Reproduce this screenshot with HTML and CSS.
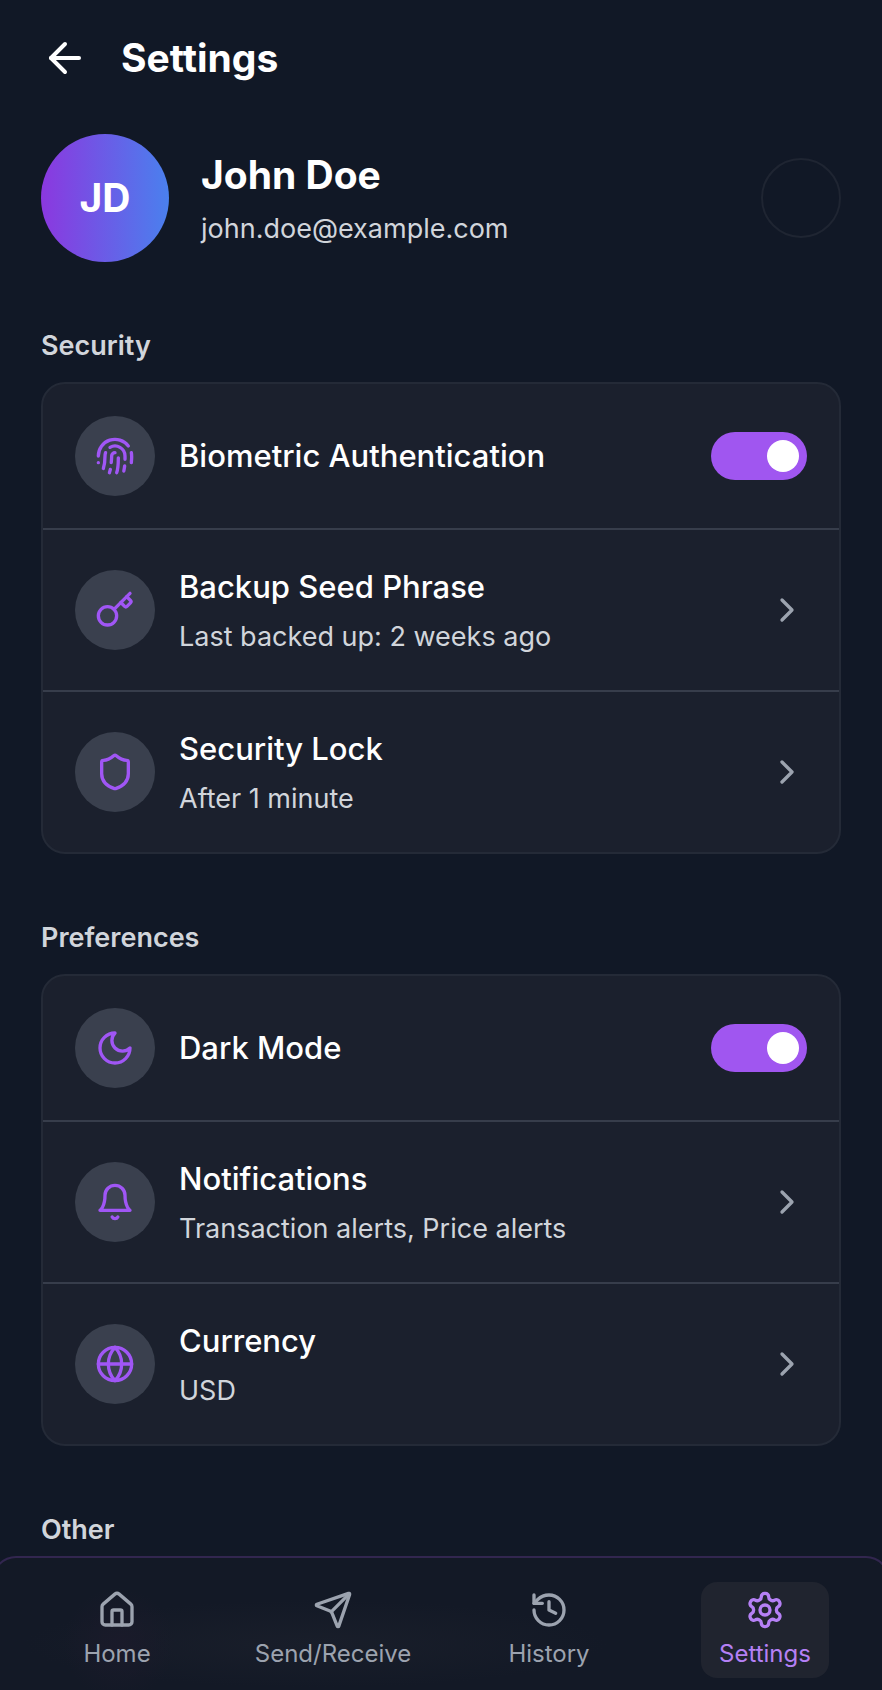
FILE: index.html
```html
<!DOCTYPE html>
<html lang="en">
<head>
<meta charset="utf-8">
<meta name="viewport" content="width=device-width, initial-scale=1">
<title>Settings</title>
<link rel="stylesheet" href="styles.css">
</head>
<body>
<main class="page">
  <header class="header">
    <button class="back" type="button" aria-label="Back">
      <svg class="icon-lg" viewBox="0 0 24 24"><path d="m12 19-7-7 7-7"/><path d="M19 12H5"/></svg>
    </button>
    <h1 class="title">Settings</h1>
  </header>

  <section class="profile">
    <div class="avatar">JD</div>
    <div class="profile-text">
      <h2 class="title">John Doe</h2>
      <p class="sub">john.doe@example.com</p>
    </div>
    <button class="edit" type="button" aria-label="Edit profile"></button>
  </section>

  <section class="group">
    <h3 class="label">Security</h3>
    <div class="card">
      <div class="row">
        <span class="badge"><svg class="icon" viewBox="0 0 24 24"><path d="M12 10a2 2 0 0 0-2 2c0 1.02-.1 2.51-.26 4"/><path d="M14 13.12c0 2.38 0 6.38-1 8.88"/><path d="M17.29 21.02c.12-.6.43-2.3.5-3.02"/><path d="M2 12a10 10 0 0 1 18-6"/><path d="M2 16h.01"/><path d="M21.8 16c.2-2 .131-5.354 0-6"/><path d="M5 19.5C5.5 18 6 15 6 12a6 6 0 0 1 .34-2"/><path d="M8.65 22c.21-.66.45-1.32.57-2"/><path d="M9 6.8a6 6 0 0 1 9 5.2v2"/></svg></span>
        <label class="row-text row-title" for="biometric">Biometric Authentication</label>
        <input class="toggle" id="biometric" type="checkbox" role="switch" checked>
      </div>
      <button class="row" type="button">
        <span class="badge"><svg class="icon" viewBox="0 0 24 24"><path d="m15.5 7.5 2.3 2.3a1 1 0 0 0 1.4 0l2.1-2.1a1 1 0 0 0 0-1.4L19 4"/><path d="m21 2-9.6 9.6"/><circle cx="7.5" cy="15.5" r="5.5"/></svg></span>
        <span class="row-text"><span class="row-title">Backup Seed Phrase</span><span class="sub">Last backed up: 2 weeks ago</span></span>
        <svg class="icon chevron" viewBox="0 0 24 24"><path d="m9 18 6-6-6-6"/></svg>
      </button>
      <button class="row" type="button">
        <span class="badge"><svg class="icon" viewBox="0 0 24 24"><path d="M20 13c0 5-3.5 7.5-7.66 8.95a1 1 0 0 1-.67-.01C7.5 20.5 4 18 4 13V6a1 1 0 0 1 1-1c2 0 4.5-1.2 6.24-2.72a1.17 1.17 0 0 1 1.52 0C14.51 3.81 17 5 19 5a1 1 0 0 1 1 1z"/></svg></span>
        <span class="row-text"><span class="row-title">Security Lock</span><span class="sub">After 1 minute</span></span>
        <svg class="icon chevron" viewBox="0 0 24 24"><path d="m9 18 6-6-6-6"/></svg>
      </button>
    </div>
  </section>

  <section class="group">
    <h3 class="label">Preferences</h3>
    <div class="card">
      <div class="row">
        <span class="badge"><svg class="icon" viewBox="0 0 24 24"><path d="M12 3a6 6 0 0 0 9 9 9 9 0 1 1-9-9Z"/></svg></span>
        <label class="row-text row-title" for="dark">Dark Mode</label>
        <input class="toggle" id="dark" type="checkbox" role="switch" checked>
      </div>
      <button class="row" type="button">
        <span class="badge"><svg class="icon" viewBox="0 0 24 24"><path d="M6 8a6 6 0 0 1 12 0c0 7 3 9 3 9H3s3-2 3-9"/><path d="M10.3 21a1.94 1.94 0 0 0 3.4 0"/></svg></span>
        <span class="row-text"><span class="row-title">Notifications</span><span class="sub">Transaction alerts, Price alerts</span></span>
        <svg class="icon chevron" viewBox="0 0 24 24"><path d="m9 18 6-6-6-6"/></svg>
      </button>
      <button class="row" type="button">
        <span class="badge"><svg class="icon" viewBox="0 0 24 24"><circle cx="12" cy="12" r="10"/><path d="M12 2a14.5 14.5 0 0 0 0 20 14.5 14.5 0 0 0 0-20"/><path d="M2 12h20"/></svg></span>
        <span class="row-text"><span class="row-title">Currency</span><span class="sub">USD</span></span>
        <svg class="icon chevron" viewBox="0 0 24 24"><path d="m9 18 6-6-6-6"/></svg>
      </button>
    </div>
  </section>

  <section class="group">
    <h3 class="label">Other</h3>
  </section>
</main>

<nav class="nav">
  <a class="tab" href="#home">
    <svg class="icon" viewBox="0 0 24 24"><path d="M15 21v-8a1 1 0 0 0-1-1h-4a1 1 0 0 0-1 1v8"/><path d="M3 10a2 2 0 0 1 .709-1.528l7-5.999a2 2 0 0 1 2.582 0l7 5.999A2 2 0 0 1 21 10v9a2 2 0 0 1-2 2H5a2 2 0 0 1-2-2z"/></svg>
    <span>Home</span>
  </a>
  <a class="tab" href="#send">
    <svg class="icon" viewBox="0 0 24 24"><path d="M14.536 21.686a.5.5 0 0 0 .937-.024l6.5-19a.496.496 0 0 0-.635-.635l-19 6.5a.5.5 0 0 0-.024.937l7.93 3.18a2 2 0 0 1 1.112 1.11z"/><path d="m21.854 2.147-10.94 10.939"/></svg>
    <span>Send/Receive</span>
  </a>
  <a class="tab" href="#history">
    <svg class="icon" viewBox="0 0 24 24"><path d="M3 12a9 9 0 1 0 9-9 9.75 9.75 0 0 0-6.74 2.74L3 8"/><path d="M3 3v5h5"/><path d="M12 7v5l4 2"/></svg>
    <span>History</span>
  </a>
  <a class="tab tab-active" href="#settings" aria-current="page">
    <svg class="icon" viewBox="0 0 24 24"><path d="M12.22 2h-.44a2 2 0 0 0-2 2v.18a2 2 0 0 1-1 1.73l-.43.25a2 2 0 0 1-2 0l-.15-.08a2 2 0 0 0-2.73.73l-.22.38a2 2 0 0 0 .73 2.73l.15.1a2 2 0 0 1 1 1.72v.51a2 2 0 0 1-1 1.74l-.15.09a2 2 0 0 0-.73 2.73l.22.38a2 2 0 0 0 2.73.73l.15-.08a2 2 0 0 1 2 0l.43.25a2 2 0 0 1 1 1.73V20a2 2 0 0 0 2 2h.44a2 2 0 0 0 2-2v-.18a2 2 0 0 1 1-1.73l.43-.25a2 2 0 0 1 2 0l.15.08a2 2 0 0 0 2.73-.73l.22-.39a2 2 0 0 0-.73-2.73l-.15-.08a2 2 0 0 1-1-1.74v-.5a2 2 0 0 1 1-1.74l.15-.09a2 2 0 0 0 .73-2.73l-.22-.38a2 2 0 0 0-2.73-.73l-.15.08a2 2 0 0 1-2 0l-.43-.25a2 2 0 0 1-1-1.73V4a2 2 0 0 0-2-2z"/><circle cx="12" cy="12" r="3"/></svg>
    <span>Settings</span>
  </a>
</nav>
</body>
</html>
```
FILE: styles.css
```css
* { box-sizing: border-box; }

body {
  margin: 0;
  height: 100vh;
  overflow: hidden;
  background: #111826;
  color: #fff;
  font-family: Inter, "Liberation Sans", sans-serif;
  font-size: 27px;
  line-height: 40px;
}

h1, h2, h3, p { margin: 0; }

button {
  margin: 0;
  padding: 0;
  border: 0;
  background: none;
  color: inherit;
  font: inherit;
  text-align: left;
  cursor: pointer;
}

svg {
  display: block;
  flex: none;
  fill: none;
  stroke: currentColor;
  stroke-width: 2;
  stroke-linecap: round;
  stroke-linejoin: round;
}

.icon { width: 40px; height: 40px; }
.icon-lg { width: 48px; height: 48px; }

.page { padding: 30px 41px; }

.header {
  display: flex;
  align-items: center;
  gap: 32px;
  margin-bottom: 48px;
}

.title {
  font-size: 39px;
  line-height: 56px;
  font-weight: 700;
}

.profile {
  display: flex;
  align-items: center;
  gap: 32px;
}

.avatar {
  display: grid;
  place-items: center;
  width: 128px;
  height: 128px;
  border-radius: 50%;
  background: linear-gradient(90deg, #8b38df, #4a80ee);
  font-size: 39px;
  font-weight: 700;
}

.profile-text {
  display: flex;
  flex: 1;
  flex-direction: column;
  gap: 6px;
}

.sub { color: #d1d5db; }

.edit {
  width: 80px;
  height: 80px;
  border: 2px solid #1f2532;
  border-radius: 50%;
}

.group { margin-top: 64px; }

.label {
  margin-bottom: 16px;
  color: #d1d5db;
  font-size: 27px;
  font-weight: 600;
}

.card {
  border: 2px solid #242a37;
  border-radius: 24px;
  background: #1b202d;
  overflow: hidden;
}

.row {
  display: flex;
  align-items: center;
  gap: 24px;
  width: 100%;
  padding: 32px;
}

.row + .row { border-top: 2px solid #373d4b; }

.badge {
  display: grid;
  place-items: center;
  width: 80px;
  height: 80px;
  border-radius: 50%;
  background: #3a404e;
  color: #a056f5;
}

.row-text {
  display: flex;
  flex: 1;
  flex-direction: column;
  gap: 6px;
  padding: 1px 0;
}

.row-title {
  font-size: 31px;
  line-height: 48px;
  font-weight: 500;
}

.chevron { color: #9ca3af; }

.toggle {
  appearance: none;
  display: flex;
  width: 96px;
  height: 48px;
  margin: 0;
  padding: 8px;
  border-radius: 24px;
  background: #4b5563;
  cursor: pointer;
}

.toggle::before {
  content: "";
  width: 32px;
  height: 32px;
  border-radius: 50%;
  background: #fff;
}

.toggle:checked {
  justify-content: flex-end;
  background: #a056f0;
}

.nav {
  position: fixed;
  right: -8px;
  bottom: 0;
  left: -8px;
  display: grid;
  grid-template-columns: repeat(4, 1fr);
  justify-items: center;
  padding: 24px 15px 12px;
  border: 2px solid #32264f;
  border-bottom: 0;
  border-radius: 24px 24px 0 0;
  background:
    radial-gradient(circle at 14% 65%, #1a1a2a, transparent 56px),
    radial-gradient(ellipse at 36% 65%, #191e2a, transparent 36%),
    #131926;
}

.tab {
  display: flex;
  flex-direction: column;
  align-items: center;
  gap: 8px;
  min-width: 128px;
  padding: 8px 16px;
  border-radius: 16px;
  color: #9ca3af;
  font-size: 24px;
  line-height: 32px;
  text-decoration: none;
}

.tab-active {
  background: #20242f;
  color: #b580f5;
}
```
